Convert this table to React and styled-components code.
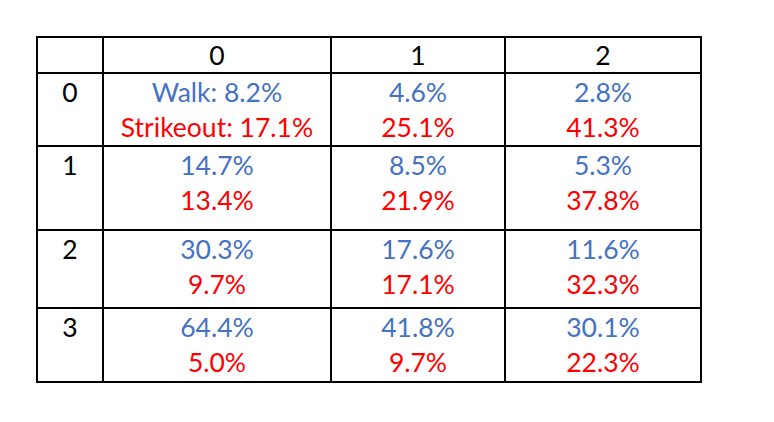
import React from "react";
import styled, { createGlobalStyle } from "styled-components";

const Global = createGlobalStyle`
  html, body {
    margin: 0;
    padding: 0;
    background: #fff;
  }
  body {
    font-family: Lato, "Liberation Sans", sans-serif;
  }
`;

const Grid = styled.div`
  display: grid;
  grid-template-columns: 64px 226px 172px 194px;
  grid-template-rows: 34px 71px 82px 76px 72px;
  gap: 2px;
  width: max-content;
  margin: 36px 0 0 36px;
  border: 2px solid #000;
  background: #000;
`;

const Cell = styled.div`
  background: #fff;
  display: flex;
  flex-direction: column;
  align-items: center;
  font-size: 26.5px;
  line-height: 35px;
  padding-top: ${(p) => (p.$head ? "0" : "1px")};
  color: #000;
`;

const Line = styled.span`
  color: ${(p) => (p.$kind === "walk" ? "#4472c4" : "#ff0000")};
  white-space: nowrap;
`;

const cols = ["0", "1", "2"];

const rows = [
  { label: "0", cells: [["Walk: 8.2%", "Strikeout: 17.1%"], ["4.6%", "25.1%"], ["2.8%", "41.3%"]] },
  { label: "1", cells: [["14.7%", "13.4%"], ["8.5%", "21.9%"], ["5.3%", "37.8%"]] },
  { label: "2", cells: [["30.3%", "9.7%"], ["17.6%", "17.1%"], ["11.6%", "32.3%"]] },
  { label: "3", cells: [["64.4%", "5.0%"], ["41.8%", "9.7%"], ["30.1%", "22.3%"]] },
];

export default function App() {
  return (
    <>
      <Global />
      <Grid role="table">
        <Cell $head />
        {cols.map((c) => (
          <Cell $head key={"h" + c}>{c}</Cell>
        ))}
        {rows.map((r) => (
          <React.Fragment key={r.label}>
            <Cell>{r.label}</Cell>
            {r.cells.map(([walk, so], i) => (
              <Cell key={i}>
                <Line $kind="walk">{walk}</Line>
                <Line $kind="so">{so}</Line>
              </Cell>
            ))}
          </React.Fragment>
        ))}
      </Grid>
    </>
  );
}
